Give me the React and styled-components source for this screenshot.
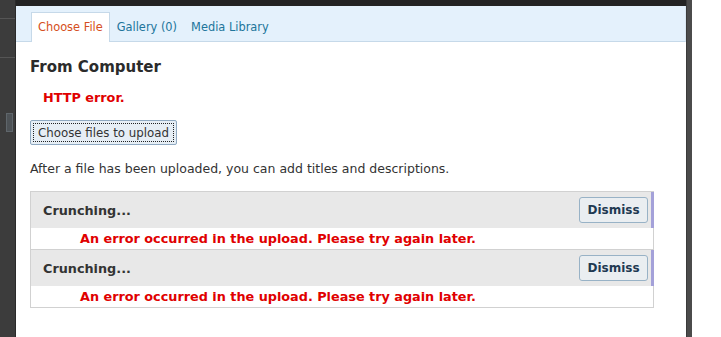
import React from "react";
import styled, { createGlobalStyle } from "styled-components";

const Global = createGlobalStyle`
  html, body { margin: 0; padding: 0; background: #ffffff; }
  body { font-family: "DejaVu Sans", Verdana, sans-serif; }
  * { box-sizing: border-box; }
`;

const Page = styled.div`
  display: flex;
  width: 721px;
  height: 337px;
  overflow: hidden;
  background: #ffffff;
`;

const LeftStrip = styled.div`
  width: 16px;
  flex: none;
  display: flex;
  flex-direction: column;
  background: #3c3c3c;
  border-right: 1px solid #2a2a2a;
`;

const StripSeg = styled.div`
  height: ${(p) => p.$h}px;
  flex: none;
  border-bottom: 1px solid #555;
`;

const StripHandle = styled.div`
  margin: 55px 0 0 6px;
  width: 7px;
  height: 19px;
  background: #4d5256;
  border: 1px solid #5f666b;
`;

const Modal = styled.div`
  width: 670px;
  flex: none;
  display: flex;
  flex-direction: column;
  background: #ffffff;
`;

const TopBar = styled.div`
  height: 6px;
  background: #232323;
`;

const TabBar = styled.div`
  height: 36px;
  display: flex;
  align-items: flex-end;
  padding-left: 15px;
  background: #e4f1fc;
  border-bottom: 1px solid #c6d9e9;
  border-right: 1px solid #d8e6f1;
`;

const Tab = styled.div`
  height: ${(p) => (p.$active ? "30px" : "28px")};
  margin-bottom: -1px;
  padding: ${(p) => (p.$active ? "0 6px 1px" : "0 6px 3px")};
  display: flex;
  align-items: center;
  font-size: 11.4px;
  color: ${(p) => (p.$active ? "#d54e21" : "#21759b")};
  background: ${(p) => (p.$active ? "#ffffff" : "transparent")};
  border: 1px solid ${(p) => (p.$active ? "#c6d9e9" : "transparent")};
  border-bottom: none;
`;

const Body = styled.div`
  padding: 0 32px 0 14px;
  display: flex;
  flex-direction: column;
  align-items: flex-start;
`;

const Heading = styled.h3`
  margin: 16px 0 0;
  font-size: 15px;
  line-height: 18px;
  font-weight: bold;
  color: #2b2b2b;
`;

const ErrorText = styled.div`
  font-size: 12.8px;
  line-height: 16px;
  font-weight: bold;
  color: #e00000;
  padding-left: ${(p) => p.$indent}px;
  margin-top: ${(p) => p.$mt || 0}px;
`;

const UploadButton = styled.button`
  margin-top: 14px;
  height: 25px;
  padding: 0 7px;
  font-family: inherit;
  font-size: 11.8px;
  color: #333;
  background: #e6eef5;
  border: 1px solid #8fa9c1;
  border-radius: 2px;
  outline: 1px dotted #222;
  outline-offset: -4px;
`;

const Para = styled.p`
  margin: 16px 0 0;
  font-size: 12.5px;
  line-height: 16px;
  color: #333;
`;

const List = styled.div`
  margin-top: 14px;
  align-self: stretch;
  border: 1px solid #d1d1d1;
  border-right: none;
`;

const Item = styled.div`
  border-bottom: 1px solid #d1d1d1;
  &:last-child { border-bottom: none; }
`;

const ItemHead = styled.div`
  height: 36px;
  display: flex;
  align-items: center;
  justify-content: space-between;
  padding: 0 3px 0 12px;
  background: #e8e8e8;
  border-right: 3px solid #a4a1d9;
`;

const Crunch = styled.span`
  font-size: 12.8px;
  font-weight: bold;
  color: #333;
`;

const Dismiss = styled.button`
  height: 26px;
  width: 69px;
  padding: 0;
  font-family: inherit;
  font-size: 12px;
  font-weight: bold;
  color: #1f3a52;
  background: #eaeef1;
  border: 1px solid #98b2c6;
  border-radius: 3px;
`;

const ItemErr = styled.div`
  height: 21px;
  display: flex;
  align-items: center;
  border-right: 1px solid #d1d1d1;
`;

const RightStrip = styled.div`
  width: 6px;
  flex: none;
  background: #4b4b4b;
  border-left: 1px solid #3a3a3a;
`;

const items = [1, 2];

export default function App() {
  return (
    <Page>
      <Global />
      <LeftStrip>
        <StripSeg $h={19} />
        <StripSeg $h={39} />
        <StripHandle />
      </LeftStrip>
      <Modal>
        <TopBar />
        <TabBar>
          <Tab $active>Choose File</Tab>
          <Tab>Gallery (0)</Tab>
          <Tab>Media Library</Tab>
        </TabBar>
        <Body>
          <Heading>From Computer</Heading>
          <ErrorText $indent={13} $mt={14}>HTTP error.</ErrorText>
          <UploadButton>Choose files to upload</UploadButton>
          <Para>After a file has been uploaded, you can add titles and descriptions.</Para>
          <List>
            {items.map((i) => (
              <Item key={i}>
                <ItemHead>
                  <Crunch>Crunching...</Crunch>
                  <Dismiss>Dismiss</Dismiss>
                </ItemHead>
                <ItemErr>
                  <ErrorText $indent={49}>
                    An error occurred in the upload. Please try again later.
                  </ErrorText>
                </ItemErr>
              </Item>
            ))}
          </List>
        </Body>
      </Modal>
      <RightStrip />
    </Page>
  );
}
